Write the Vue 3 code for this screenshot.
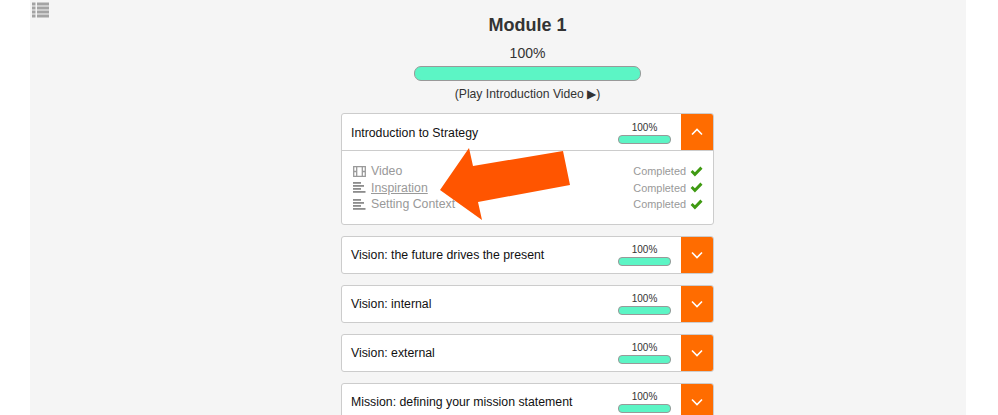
<script setup>
const lessons = [
  { name: 'Video', icon: 'film' },
  { name: 'Inspiration', icon: 'text', link: true },
  { name: 'Setting Context', icon: 'text' },
]
const modules = [
  'Vision: the future drives the present',
  'Vision: internal',
  'Vision: external',
  'Mission: defining your mission statement',
]
</script>

<template>
  <div class="page">
    <main class="panel">
      <svg class="list-icon" viewBox="0 0 18 18" width="18" height="18" aria-hidden="true">
        <g fill="#a3a3a3">
          <rect x="0" y="0.5" width="3.5" height="3" /><rect x="5" y="0.5" width="12" height="3" />
          <rect x="0" y="4.5" width="3.5" height="3" /><rect x="5" y="4.5" width="12" height="3" />
          <rect x="0" y="8.5" width="3.5" height="3" /><rect x="5" y="8.5" width="12" height="3" />
          <rect x="0" y="12.5" width="3.5" height="3" /><rect x="5" y="12.5" width="12" height="3" />
        </g>
      </svg>

      <header class="head">
        <h1>Module 1</h1>
        <div class="head-pct">100%</div>
        <div class="big-bar"></div>
        <div class="play">(Play Introduction Video ▶)</div>
      </header>

      <section class="list">
        <article class="card">
          <div class="row">
            <div class="title open-title">Introduction to Strategy</div>
            <div class="progress"><span>100%</span><i class="bar"></i></div>
            <div class="toggle">
              <svg viewBox="0 0 12 8" width="12" height="8" aria-hidden="true"><path d="M1 6.5 6 1.5l5 5" fill="none" stroke="#fff" stroke-width="1.6" /></svg>
            </div>
          </div>
          <div class="lessons">
            <div v-for="l in lessons" :key="l.name" class="lesson">
              <svg v-if="l.icon === 'film'" class="lesson-icon" viewBox="0 0 13 11" width="13" height="11" aria-hidden="true">
                <path d="M.7.7h11.6v9.6H.7zM3.7.7v9.6M9.3.7v9.6M.7 5.5h3M9.3 5.5h3" fill="none" stroke="#9a9a9a" stroke-width="1.3" />
              </svg>
              <svg v-else class="lesson-icon" viewBox="0 0 13 11" width="13" height="11" aria-hidden="true">
                <g fill="#8c8c8c"><rect y="0" width="8" height="1.8" /><rect y="3" width="11" height="1.8" /><rect y="6" width="8" height="1.8" /><rect y="9" width="12.5" height="1.8" /></g>
              </svg>
              <span class="lesson-name" :class="{ link: l.link }">{{ l.name }}</span>
              <span class="done">Completed</span>
              <svg class="check" viewBox="0 0 13 11" width="13" height="11" aria-hidden="true">
                <path d="M0.6 6 2.6 3.9 4.9 6.2 10.4 0.6 12.5 2.7 4.9 10.4Z" fill="#3f9a12" />
              </svg>
            </div>
          </div>
        </article>

        <article v-for="m in modules" :key="m" class="card">
          <div class="row closed">
            <div class="title">{{ m }}</div>
            <div class="progress"><span>100%</span><i class="bar"></i></div>
            <div class="toggle">
              <svg viewBox="0 0 12 8" width="12" height="8" aria-hidden="true"><path d="M1 1.5 6 6.5l5-5" fill="none" stroke="#fff" stroke-width="1.6" /></svg>
            </div>
          </div>
        </article>
      </section>

      <svg class="arrow" viewBox="0 0 998 415" width="998" height="415" aria-hidden="true">
        <polygon points="440,190 469,148 473,166 563,151 570,185 478,202 482,220" fill="#ff5500" />
      </svg>
    </main>
  </div>
</template>

<style>
html, body { margin: 0; background: #fff; overflow: hidden; }
</style>

<style scoped>
.page {
  width: 998px;
  height: 415px;
  overflow: hidden;
  background: #fff;
  font-family: "Liberation Sans", Arial, sans-serif;
}
.panel {
  position: relative;
  box-sizing: border-box;
  width: 936px;
  height: 415px;
  margin-left: 30px;
  background: #f5f5f5;
  display: flex;
  flex-direction: column;
  align-items: center;
  padding-left: 59px;
  overflow: hidden;
}
.list-icon { position: absolute; left: 2px; top: 2px; }
.head {
  display: flex;
  flex-direction: column;
  align-items: center;
  color: #333;
}
h1 {
  margin: 14px 0 0;
  font-size: 18px;
  line-height: 22px;
  font-weight: 700;
}
.head-pct { margin-top: 9px; font-size: 14px; line-height: 16px; }
.big-bar {
  box-sizing: border-box;
  width: 227px;
  height: 15px;
  margin-top: 5px;
  background: #5cf5c5;
  border: 1px solid #999;
  border-radius: 7px;
}
.play { margin-top: 5px; font-size: 12.2px; line-height: 16px; }
.list {
  width: 373px;
  margin-top: 11px;
  display: flex;
  flex-direction: column;
  gap: 11px;
}
.card {
  box-sizing: border-box;
  background: #fff;
  border: 1px solid #ccc;
  border-radius: 3px;
  overflow: hidden;
  flex: none;
}
.row {
  box-sizing: border-box;
  display: flex;
  align-items: center;
  height: 37px;
  border-bottom: 1px solid #ccc;
}
.row.closed { height: 36px; border-bottom: 0; }
.title {
  flex: 1;
  padding-left: 9px;
  font-size: 12.3px;
  color: #111;
}
.open-title { padding-top: 2px; }
.progress {
  width: 53px;
  margin-right: 10px;
  padding-top: 1px;
  display: flex;
  flex-direction: column;
  align-items: center;
  font-size: 10px;
  line-height: 12px;
  color: #333;
}
.bar {
  display: block;
  box-sizing: border-box;
  width: 53px;
  height: 9px;
  margin-top: 1px;
  background: #5cf5c5;
  border: 1px solid #999;
  border-radius: 4px;
}
.toggle {
  width: 32px;
  align-self: stretch;
  background: #ff6c00;
  display: flex;
  align-items: center;
  justify-content: center;
}
.lessons {
  padding: 12px 10px 11px 11px;
  font-size: 12.3px;
  line-height: 16.5px;
  color: #999;
}
.lesson { display: flex; align-items: center; }
.lesson-icon { flex: none; margin-right: 5px; }
.lesson-name { flex: 1; }
.link { text-decoration: underline; }
.done { font-size: 10.9px; color: #999; }
.check { margin-left: 4px; flex: none; }
.arrow { position: absolute; left: -30px; top: 0; pointer-events: none; }
</style>
